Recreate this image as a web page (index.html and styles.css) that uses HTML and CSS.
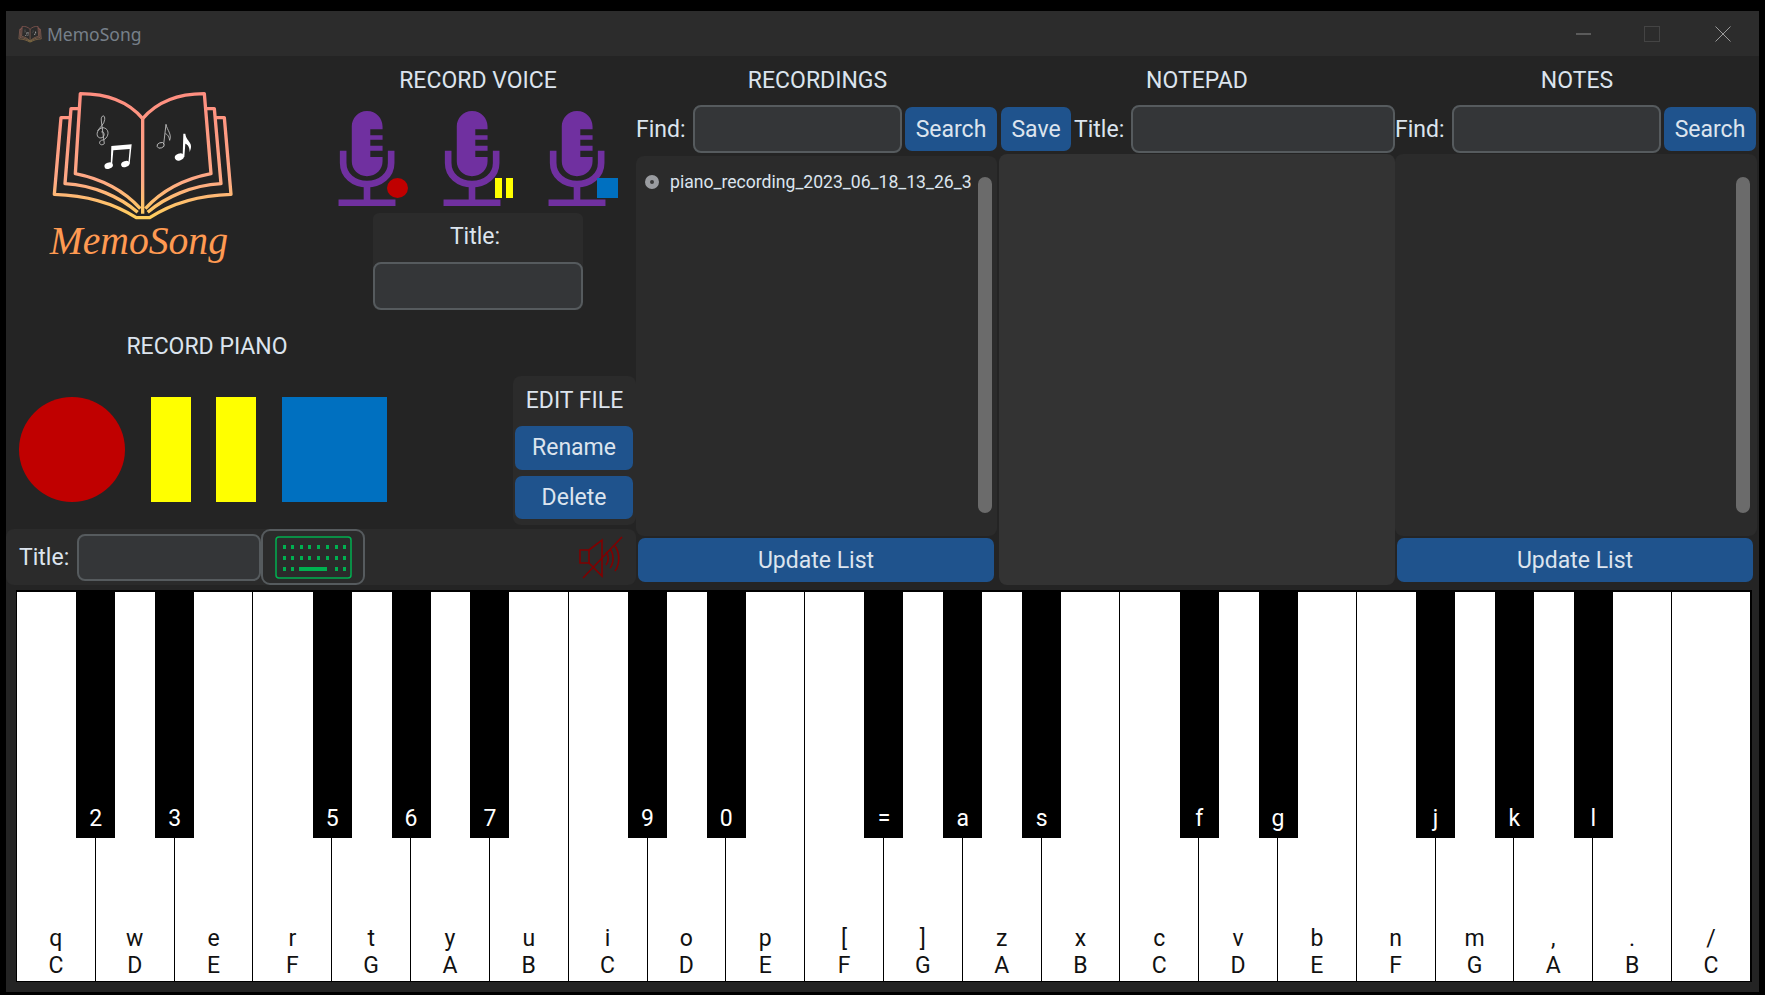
FILE: index.html
```html
<!DOCTYPE html>
<html lang="en">
<head>
    <meta charset="UTF-8">
    <title>MemoSong</title>
    <link rel="stylesheet" href="styles.css">
</head>
<body>
    <svg class="svg-defs" aria-hidden="true">
        <defs>
            <linearGradient id="bookGrad" gradientUnits="userSpaceOnUse" x1="0" y1="270" x2="0" y2="655">
                <stop offset="0" stop-color="#ff8d80"/>
                <stop offset="0.7" stop-color="#ffa985"/>
                <stop offset="1" stop-color="#ffd05c"/>
            </linearGradient>
            <symbol id="book" viewBox="140 260 570 410">
                <g fill="none" stroke="url(#bookGrad)" stroke-width="10" stroke-linejoin="round">
                    <path d="M427 355 C385 305 320 280 240 280 L225 520 C300 535 370 570 420 625"/>
                    <path d="M427 355 C470 305 535 280 612 280 L632 520 C555 535 485 570 435 625"/>
                    <path d="M427 355 V640"/>
                    <path d="M238 325 H212 L194 550 C280 555 360 590 412 636"/>
                    <path d="M615 325 H642 L662 550 C575 555 495 590 442 636"/>
                    <path d="M210 352 H182 L162 582 C270 585 350 615 408 652 H448 C505 615 585 585 692 582 L672 352 H645"/>
                </g>
                <g fill="#fff">
                    <ellipse cx="325" cy="496" rx="13" ry="9" transform="rotate(-20 325 496)"/>
                    <ellipse cx="375" cy="491" rx="13" ry="9" transform="rotate(-20 375 491)"/>
                    <path d="M333 437 L394 432 L388 490 H384 L388 446 L339 450 L335 496 H331 Z"/>
                    <ellipse cx="537" cy="470" rx="14" ry="10" transform="rotate(-20 537 470)"/>
                    <path d="M549 400 H555 C558 425 582 425 568 455 C568 440 562 432 555 430 L552 470 H547 Z"/>
                </g>
                <g fill="none" stroke="#c9c9c9" stroke-width="2.5">
                    <path d="M312 430 C300 440 292 425 303 420 C325 418 332 385 308 382 C285 385 285 418 305 412 C318 405 308 390 303 395 M312 430 L303 362 C300 345 315 340 313 358 C312 372 298 380 292 392"/>
                    <ellipse cx="481" cy="435" rx="11" ry="8" transform="rotate(-20 481 435)"/>
                    <path d="M490 432 L497 372 C500 390 515 400 508 420 C505 405 500 402 495 400"/>
                </g>
            </symbol>
            <symbol id="mic" viewBox="54 183 172 287">
                <path fill="#7030a0" d="M140 183 C168 183 187 205 187 230 V238 H150 V256 H187 V270 H150 V288 H187 V303 H150 V322 H187 V335 C187 360 168 380 140 380 C113 380 94 360 94 335 V230 C94 205 113 183 140 183 Z"/>
                <path fill="none" stroke="#7030a0" stroke-width="20" d="M68 303 V340 C68 378 100 404 140 404 C180 404 213 378 213 340 V303"/>
                <path fill="#7030a0" d="M130 404 H150 V450 H226 V470 H54 V450 H130 Z"/>
            </symbol>
        </defs>
    </svg>

    <div class="window">
        <div class="titlebar">
            <svg class="title-icon"><use href="#book"/></svg>
            <span class="title-text">MemoSong</span>
            <div class="window-btns">
                <svg class="win-btn win-min" viewBox="0 0 16 16"><path d="M0 8H15" stroke="#8a8a8a" fill="none"/></svg>
                <svg class="win-btn" viewBox="0 0 16 16"><rect x="0.5" y="0.5" width="15" height="15" stroke="#444" fill="none"/></svg>
                <svg class="win-btn" viewBox="0 0 16 16"><path d="M0.5 0.5L15.5 15.5M15.5 0.5L0.5 15.5" stroke="#9a9a9a" fill="none"/></svg>
            </div>
        </div>

        <div class="top">
            <div class="left">
                <div class="left-upper">
                    <div class="logo-col">
                        <svg class="logo" viewBox="140 260 570 540">
                            <use href="#book" x="140" y="260" width="570" height="410"/>
                            <text class="logo-text" x="148" y="762" textLength="535" lengthAdjust="spacingAndGlyphs">MemoSong</text>
                        </svg>
                    </div>
                    <div class="voice-col">
                        <div class="heading">RECORD VOICE</div>
                        <div class="mics">
                            <div class="mic-wrap">
                                <svg class="mic"><use href="#mic"/></svg>
                                <span class="badge badge-rec"></span>
                            </div>
                            <div class="mic-wrap">
                                <svg class="mic"><use href="#mic"/></svg>
                                <span class="badge badge-pause"><i></i><i></i></span>
                            </div>
                            <div class="mic-wrap">
                                <svg class="mic"><use href="#mic"/></svg>
                                <span class="badge badge-stop"></span>
                            </div>
                        </div>
                        <div class="voice-title">
                            <div class="voice-label">Title:</div>
                            <input type="text" class="field voice-input">
                        </div>
                    </div>
                </div>

                <div class="left-mid">
                    <div class="piano-col">
                        <div class="heading piano-heading">RECORD PIANO</div>
                        <div class="controls">
                            <div class="ctl-rec"></div>
                            <div class="ctl-pause"><i></i><i></i></div>
                            <div class="ctl-stop"></div>
                        </div>
                    </div>
                    <div class="edit-col">
                        <div class="edit-label">EDIT FILE</div>
                        <button class="btn edit-btn">Rename</button>
                        <button class="btn edit-btn">Delete</button>
                    </div>
                </div>

                <div class="title-bar-row">
                    <span class="label">Title:</span>
                    <input type="text" class="field piano-input">
                    <div class="kbd-toggle">
                        <svg class="kbd-icon" viewBox="0 0 77 43">
                            <rect x="1" y="1" width="75" height="41" rx="3" fill="none" stroke="#00b050" stroke-width="1.5"/>
                            <g fill="#00b050">
                                <rect x="8" y="9" width="3" height="4"/><rect x="16" y="9" width="3" height="4"/><rect x="25" y="9" width="3" height="4"/><rect x="33" y="9" width="3" height="4"/><rect x="42" y="9" width="3" height="4"/><rect x="51" y="9" width="3" height="4"/><rect x="60" y="9" width="3" height="4"/><rect x="68" y="9" width="3" height="4"/>
                                <rect x="8" y="20" width="3" height="4"/><rect x="16" y="20" width="3" height="4"/><rect x="25" y="20" width="3" height="4"/><rect x="33" y="20" width="3" height="4"/><rect x="42" y="20" width="3" height="4"/><rect x="51" y="20" width="3" height="4"/><rect x="60" y="20" width="3" height="4"/><rect x="68" y="20" width="3" height="4"/>
                                <rect x="8" y="31" width="3" height="4"/><rect x="16" y="31" width="3" height="4"/><rect x="24" y="31" width="28" height="4"/><rect x="60" y="31" width="3" height="4"/><rect x="68" y="31" width="3" height="4"/>
                            </g>
                        </svg>
                    </div>
                    <svg class="mute-icon" viewBox="0 0 44 43" fill="none" stroke="#800000" stroke-width="1.6">
                        <path d="M1 14H10V27H1Z"/>
                        <path d="M10 14L23 4V40L10 27"/>
                        <path d="M27 16C30 19 30 25 27 29"/>
                        <path d="M31 13C35 18 35 27 31 32"/>
                        <path d="M36 10C41 17 41 28 36 35"/>
                        <path d="M4 42L43 1"/>
                    </svg>
                </div>
            </div>

            <div class="panel recordings">
                <div class="heading">RECORDINGS</div>
                <div class="tool-row">
                    <span class="label find-label">Find:</span>
                    <input type="text" class="field find-input">
                    <button class="btn search-btn">Search</button>
                </div>
                <div class="list">
                    <div class="list-body">
                        <label class="list-item"><span class="radio"></span><span class="file-name">piano_recording_2023_06_18_13_26_3</span></label>
                    </div>
                    <div class="scrollbar"></div>
                </div>
                <button class="btn update-btn">Update List</button>
            </div>

            <div class="panel notepad">
                <div class="heading">NOTEPAD</div>
                <div class="tool-row">
                    <button class="btn save-btn">Save</button>
                    <span class="label note-title">Title:</span>
                    <input type="text" class="field note-input">
                </div>
                <div class="note-area"></div>
            </div>

            <div class="panel notes">
                <div class="heading">NOTES</div>
                <div class="tool-row">
                    <span class="label find-label">Find:</span>
                    <input type="text" class="field find-input">
                    <button class="btn search-btn">Search</button>
                </div>
                <div class="list notes-list">
                    <div class="list-body"></div>
                    <div class="scrollbar"></div>
                </div>
                <button class="btn update-btn">Update List</button>
            </div>
        </div>

        <div class="piano">
            <div class="key"><span>q</span><span>C</span><b>2</b></div>
            <div class="key"><span>w</span><span>D</span><b>3</b></div>
            <div class="key"><span>e</span><span>E</span></div>
            <div class="key"><span>r</span><span>F</span><b>5</b></div>
            <div class="key"><span>t</span><span>G</span><b>6</b></div>
            <div class="key"><span>y</span><span>A</span><b>7</b></div>
            <div class="key"><span>u</span><span>B</span></div>
            <div class="key"><span>i</span><span>C</span><b>9</b></div>
            <div class="key"><span>o</span><span>D</span><b>0</b></div>
            <div class="key"><span>p</span><span>E</span></div>
            <div class="key"><span>[</span><span>F</span><b>=</b></div>
            <div class="key"><span>]</span><span>G</span><b>a</b></div>
            <div class="key"><span>z</span><span>A</span><b>s</b></div>
            <div class="key"><span>x</span><span>B</span></div>
            <div class="key"><span>c</span><span>C</span><b>f</b></div>
            <div class="key"><span>v</span><span>D</span><b>g</b></div>
            <div class="key"><span>b</span><span>E</span></div>
            <div class="key"><span>n</span><span>F</span><b>j</b></div>
            <div class="key"><span>m</span><span>G</span><b>k</b></div>
            <div class="key"><span>,</span><span>A</span><b>l</b></div>
            <div class="key"><span>.</span><span>B</span></div>
            <div class="key"><span>/</span><span>C</span></div>
        </div>
    </div>
</body>
</html>
```

FILE: styles.css
```css
html, body {
    margin: 0;
    padding: 0;
    height: 100%;
    overflow: hidden;
}

body {
    background-color: #000;
    color: #dce4ee;
    font-family: Roboto, "Liberation Sans", sans-serif;
    font-size: 23px;
    padding: 11px 0 0 6px;
    box-sizing: border-box;
}

.svg-defs {
    position: absolute;
    width: 0;
    height: 0;
}

.window {
    width: 1753px;
    height: 981px;
    background-color: #242424;
}

/* title bar */
.titlebar {
    height: 45px;
    background-color: #2c2c2c;
    display: flex;
    align-items: center;
    padding-left: 12px;
}

.title-icon {
    width: 24px;
    height: 18px;
    opacity: 0.8;
    margin-right: 5px;
}

.title-text {
    font-family: "Noto Sans", sans-serif;
    font-size: 17.5px;
    color: #77808a;
}

.window-btns {
    margin-left: auto;
    display: flex;
    gap: 55px;
    padding-right: 28px;
}

.win-btn {
    width: 16px;
    height: 16px;
}

.win-min {
    margin-right: -3px;
}

/* top area */
.top {
    height: 534px;
    display: flex;
}

.heading {
    height: 49px;
    line-height: 49px;
    text-align: center;
}

.left {
    width: 630px;
}

.left-upper {
    height: 274px;
    display: flex;
}

.logo-col {
    width: 314px;
    padding: 31px 0 0 41px;
    box-sizing: border-box;
}

.logo {
    width: 190px;
    height: 180px;
    display: block;
}

.logo-text {
    font-family: "Liberation Serif", serif;
    font-style: italic;
    font-size: 118px;
    fill: #ff9a52;
}

.voice-col {
    width: 316px;
}

.mics {
    display: flex;
    gap: 35px;
    margin: 6px 0 0 18px;
}

.mic-wrap {
    position: relative;
    width: 70px;
    height: 95px;
}

.mic {
    width: 58px;
    height: 95px;
    display: block;
}

.badge {
    position: absolute;
    right: 0;
    bottom: 8px;
    width: 21px;
    height: 20px;
}

.badge-rec {
    background-color: #c00000;
    border-radius: 50%;
}

.badge-pause {
    display: flex;
    justify-content: space-between;
    width: 18px;
}

.badge-pause i {
    width: 7px;
    background-color: #ff0;
}

.badge-stop {
    background-color: #0070c0;
}

.voice-title {
    width: 210px;
    height: 97px;
    margin: 7px 0 0 53px;
    background-color: #2b2b2b;
    border-radius: 6px;
    text-align: center;
}

.voice-label {
    height: 49px;
    line-height: 48px;
    padding-right: 6px;
}

.field {
    background-color: #343638;
    border: 2px solid #565b5e;
    border-radius: 8px;
    box-sizing: border-box;
    height: 48px;
    padding: 0;
    display: block;
}

.voice-input {
    width: 210px;
}

.left-mid {
    height: 199px;
    display: flex;
}

.piano-col {
    width: 507px;
}

.piano-heading {
    width: 402px;
    height: 34px;
    line-height: 34px;
}

.controls {
    display: flex;
    margin: 33px 0 0 13px;
}

.ctl-rec {
    width: 106px;
    height: 105px;
    background-color: #c00000;
    border-radius: 50%;
}

.ctl-pause {
    display: flex;
    gap: 25px;
    margin: 0 26px;
}

.ctl-pause i {
    width: 40px;
    height: 105px;
    background-color: #ff0;
}

.ctl-stop {
    width: 105px;
    height: 105px;
    background-color: #0070c0;
}

.edit-col {
    width: 123px;
    margin-top: 46px;
    height: 149px;
    background-color: #2b2b2b;
    border-radius: 8px;
    display: flex;
    flex-direction: column;
}

.edit-label {
    height: 52px;
    line-height: 49px;
    text-align: center;
}

.btn {
    background-color: #1f538d;
    color: #dce4ee;
    border: none;
    border-radius: 7px;
    font-family: inherit;
    font-size: 23px;
    height: 44px;
    padding: 0;
}

.edit-btn {
    width: 118px;
    height: 45px;
    margin: 0 0 6px 2px;
}

.title-bar-row {
    height: 56px;
    background-color: #2b2b2b;
    border-radius: 8px;
    display: flex;
    align-items: center;
    padding-left: 13px;
}

.label {
    white-space: nowrap;
}

.piano-input {
    width: 184px;
    margin-left: 8px;
    height: 47px;
}

.kbd-toggle {
    width: 104px;
    height: 56px;
    border: 2px solid #565b5e;
    border-radius: 9px;
    box-sizing: border-box;
    display: flex;
    align-items: center;
    justify-content: center;
}

.kbd-icon {
    width: 77px;
    height: 43px;
}

.mute-icon {
    width: 44px;
    height: 43px;
    margin-left: 214px;
}

/* side panels */
.panel {
    display: flex;
    flex-direction: column;
}

.recordings {
    width: 363px;
}

.notepad {
    width: 396px;
}

.notes {
    width: 364px;
}

.tool-row {
    height: 48px;
    display: flex;
    align-items: center;
    flex-shrink: 0;
}

.find-label {
    width: 57px;
}

.find-input {
    width: 209px;
}

.search-btn {
    width: 92px;
    margin-left: 3px;
}

.list {
    width: 361px;
    height: 380px;
    margin-top: 3px;
    background-color: #2b2b2b;
    border-radius: 8px;
    display: flex;
    flex-shrink: 0;
}

.notes-list {
    height: 382px;
    margin-top: 1px;
    width: 362px;
}

.list-body {
    flex: 1;
    min-width: 0;
    overflow: hidden;
    padding: 16px 0 0 9px;
    margin-right: 7px;
}

.list-item {
    display: flex;
    align-items: center;
    gap: 11px;
    font-size: 17.6px;
    line-height: 20px;
}

.radio {
    width: 4px;
    height: 4px;
    border: 5px solid #9a9ca0;
    background-color: #3a3a3a;
    border-radius: 50%;
    flex-shrink: 0;
}

.file-name {
    white-space: nowrap;
}

.scrollbar {
    width: 14px;
    height: 336px;
    margin: 21px 5px 0 0;
    background-color: #6b6b6b;
    border-radius: 7px;
    flex-shrink: 0;
}

.notes-list .scrollbar {
    margin-top: 23px;
    margin-right: 7px;
}

.update-btn {
    width: 356px;
    margin: 2px 0 0 2px;
}

.notepad .tool-row {
    padding-left: 2px;
}

.save-btn {
    width: 70px;
}

.note-title {
    margin-left: 3px;
    width: 57px;
}

.note-input {
    width: 264px;
}

.note-area {
    width: 396px;
    height: 431px;
    margin-top: 1px;
    background-color: #333;
    border-radius: 8px;
}

/* piano */
.piano {
    width: 1736px;
    height: 392px;
    margin: 0 0 0 10px;
    background-color: #000;
    padding: 2px 1px 1px 1px;
    box-sizing: border-box;
    display: flex;
}

.key {
    position: relative;
    flex: 1;
    background-color: #fff;
    border-right: 1px solid #000;
    color: #111;
    display: flex;
    flex-direction: column;
    justify-content: flex-end;
    align-items: center;
    line-height: 27px;
    padding-bottom: 2px;
}

.key b {
    position: absolute;
    top: -2px;
    right: -20.5px;
    width: 39px;
    height: 248px;
    padding-bottom: 6px;
    box-sizing: border-box;
    background-color: #000;
    color: #fff;
    font-weight: 400;
    display: flex;
    align-items: flex-end;
    justify-content: center;
    z-index: 1;
}
```
